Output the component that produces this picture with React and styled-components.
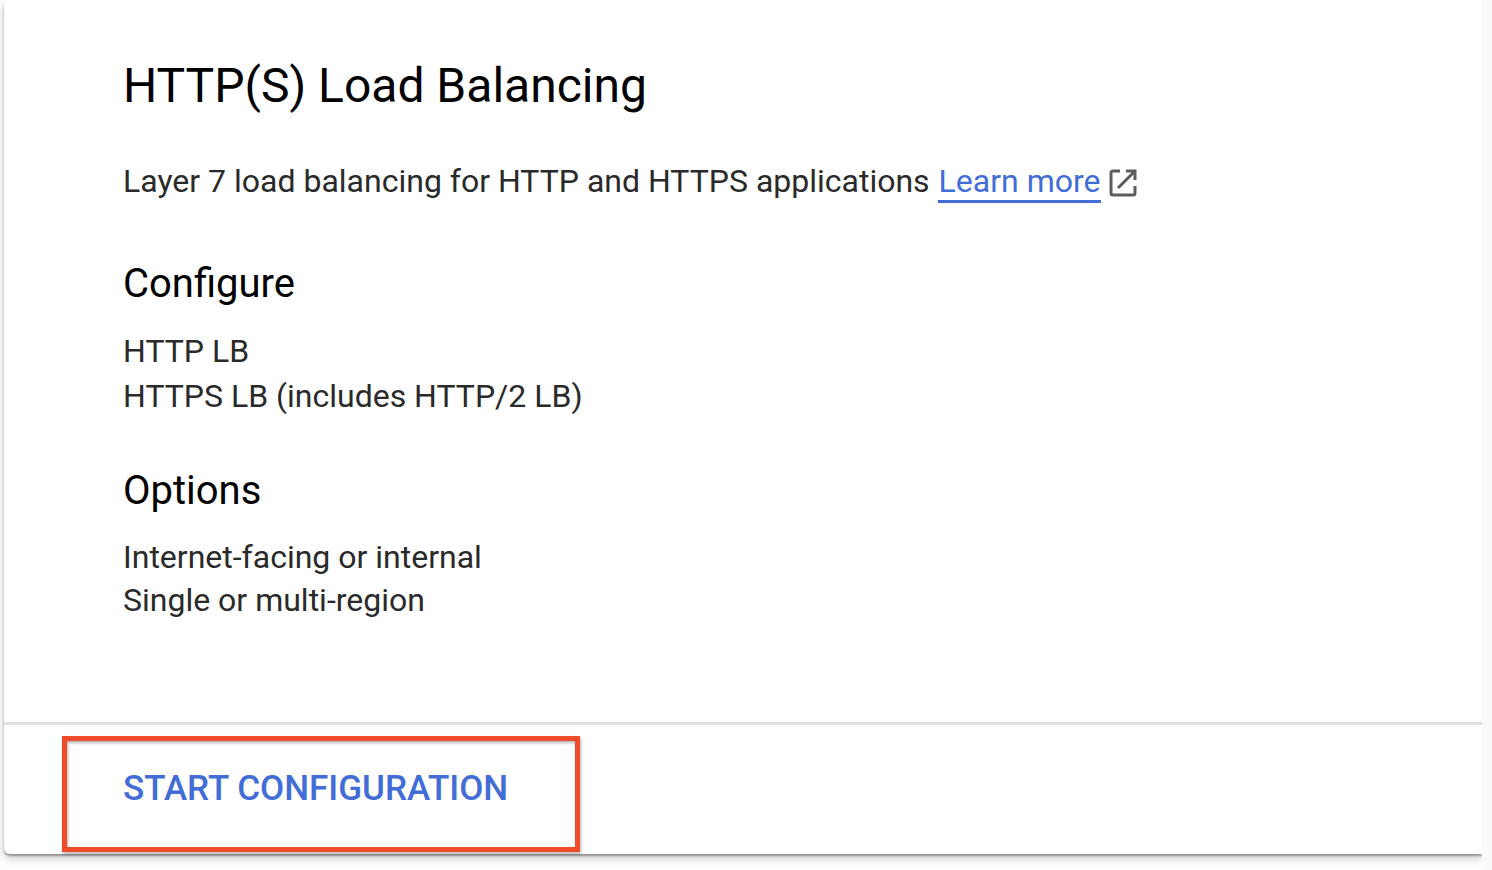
import React from "react";
import styled, { createGlobalStyle } from "styled-components";

const GlobalStyle = createGlobalStyle`
  * { box-sizing: border-box; }
  body {
    margin: 0;
    background: #fafafa;
    font-family: Roboto, "Liberation Sans", sans-serif;
    color: #2a2a2a;
  }
`;

const Page = styled.main`
  margin-right: 10px;
  padding: 0 0 16px 4px;
  background: #fefefe;
  overflow: hidden;
`;

const Card = styled.article`
  background: #fff;
  border-radius: 6px 0 0 6px;
  box-shadow: 0 2px 2px rgba(0, 0, 0, 0.3), 0 4px 10px rgba(0, 0, 0, 0.22);
`;

const Body = styled.div`
  padding: 56px 119px 100px;
`;

const Title = styled.h1`
  margin: 0;
  font-size: 48px;
  line-height: 60px;
  font-weight: 400;
  color: #000;
`;

const Summary = styled.p`
  margin: 44px 0 57px;
  font-size: 32px;
  line-height: 42px;
`;

const LearnMore = styled.a`
  margin-right: 8px;
  padding: 0 1px;
  color: #426dd6;
  text-decoration: none;
  border-bottom: 3px solid #426dd6;
`;

const Icon = styled.svg`
  vertical-align: -5px;
`;

const Section = styled.section`
  & + & {
    margin-top: 47px;
  }
`;

const Heading = styled.h2`
  margin: 0 0 20px;
  font-size: 40px;
  line-height: 50px;
  font-weight: 400;
  color: #000;
`;

const List = styled.ul`
  margin: 0;
  padding: 0;
  list-style: none;
  font-size: 32px;
  line-height: ${(p) => p.$leading}px;
`;

const Footer = styled.footer`
  border-top: 3px solid #e0e0e0;
  padding: 11px 58px 2px;
`;

const StartButton = styled.button`
  display: block;
  width: 518px;
  height: 116px;
  padding: 0 56px 10px;
  border: 5px solid #ee4b2a;
  box-shadow: 1px 2px 3px rgba(0, 0, 0, 0.3), inset 1px 2px 3px rgba(0, 0, 0, 0.3);
  background: transparent;
  color: #426dd6;
  font: 500 35px/44px Roboto, "Liberation Sans", sans-serif;
  text-align: left;
  text-transform: uppercase;
  cursor: pointer;
`;

function ExternalIcon() {
  return (
    <Icon width="28" height="28" viewBox="0 0 28 28" fill="none" stroke="#5c5c5c" strokeWidth="3" aria-hidden="true">
      <path d="M11 2H4Q2 2 2 4V24Q2 26 4 26H24Q26 26 26 24V17M17 2H26V11M25 3L9 19" />
    </Icon>
  );
}

export default function App() {
  return (
    <>
      <GlobalStyle />
      <Page>
        <Card>
          <Body>
            <Title>HTTP(S) Load Balancing</Title>
            <Summary>
              Layer 7 load balancing for HTTP and HTTPS applications{" "}
              <LearnMore href="#learn-more">Learn more</LearnMore>
              <ExternalIcon />
            </Summary>
            <Section>
              <Heading>Configure</Heading>
              <List $leading={45}>
                <li>HTTP LB</li>
                <li>HTTPS LB (includes HTTP/2 LB)</li>
              </List>
            </Section>
            <Section>
              <Heading>Options</Heading>
              <List $leading={43}>
                <li>Internet-facing or internal</li>
                <li>Single or multi-region</li>
              </List>
            </Section>
          </Body>
          <Footer>
            <StartButton type="button">Start configuration</StartButton>
          </Footer>
        </Card>
      </Page>
    </>
  );
}
